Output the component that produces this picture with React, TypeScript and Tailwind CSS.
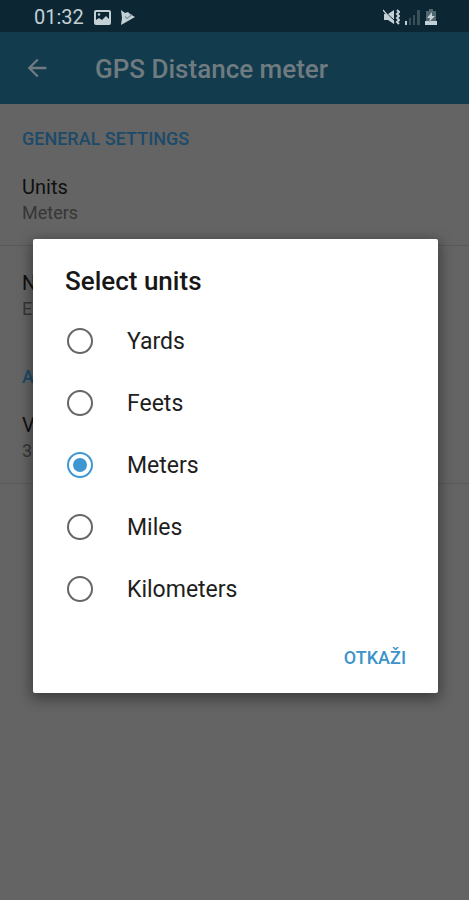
import React, { useState } from "react";
import classNames from "clsx";
import { MdArrowBack } from "react-icons/md";

const unitOptions = ["Yards", "Feets", "Meters", "Miles", "Kilometers"];

interface PreferenceProp {
  title: string;
  summary: string;
  divider?: boolean;
}

const Preference = ({ title, summary, divider }: PreferenceProp) => (
  <div
    className={classNames(
      "h-24 px-[22px] pt-[23px]",
      divider && "border-b border-[#595959]"
    )}
  >
    <div className="text-xl leading-7 text-[#101010]">{title}</div>
    <div className="text-lg leading-6 text-[#363636]">{summary}</div>
  </div>
);

const Category = ({ children }: { children: React.ReactNode }) => (
  <h2 className="h-[46px] px-[22px] pt-[23px] text-lg font-medium leading-6 text-[#1c4a69]">
    {children}
  </h2>
);

const StatusBar = () => (
  <div className="flex h-8 items-center justify-between bg-[#0c2733] pl-[34px] pr-8 pt-0.5 text-[#c3d0d6]">
    <div className="flex items-center gap-2.5">
      <span className="text-xl leading-7">01:32</span>
      <svg className="h-[15px] w-[17px]" viewBox="0 0 17 15">
        <rect x="1" y="1" width="15" height="13" rx="1" fill="none" stroke="currentColor" strokeWidth="2" />
        <path d="M2 13V10l3-2 3 2 4-4 3 3v4z" fill="currentColor" />
        <circle cx="5" cy="4.500" r="1.200" fill="currentColor" />
      </svg>
      <svg className="h-[15px] w-[14px]" viewBox="0 0 14 15">
        <path d="M0 0l4 3 3-1 2 2 5 3-14 8 1-7z" fill="currentColor" />
        <path d="M4 6.500l2 2 5-4" fill="none" stroke="#7d919a" strokeWidth="1.200" />
      </svg>
    </div>
    <div className="flex items-center gap-[5px]">
      <svg className="h-4 w-[17px]" viewBox="0 0 17 16">
        <path d="M1 5h4l6-4v14L5 11H1z" fill="currentColor" />
        <path d="M1 2l10 9" stroke="#0c2733" strokeWidth="1" />
        <path d="M0 1l11 13" stroke="currentColor" strokeWidth="1.200" />
        <path d="M14 1l2 2-2 2 2 2-2 2 2 2-2 2 2 2" fill="none" stroke="currentColor" strokeWidth="2" />
      </svg>
      <svg className="h-[15px] w-[15px]" viewBox="0 0 15 15">
        <path d="M0 11h2v4H0z" fill="currentColor" />
        <path d="M4 8h2v7H4zM8 5h2v10H8zM12 0h3v15h-3z" fill="#395059" />
      </svg>
      <svg className="h-4 w-3" viewBox="0 0 12 16">
        <path d="M4 0h4v2h3v14H1V2h3z" fill="#526871" />
        <path d="M0 12h12v4H0zM7 3L2 9h3l-1 4 6-6H7z" fill="currentColor" />
      </svg>
    </div>
  </div>
);

const App = () => {
  const [unit, setUnit] = useState("Meters");
  const [open, setOpen] = useState(true);

  return (
    <div className="relative min-h-screen bg-[#646464] font-[Roboto,sans-serif]">
      <StatusBar />
      <header className="flex h-[72px] items-center bg-[#123b4e] pl-[23px] text-[#707b80]">
        <button type="button" aria-label="Back">
          <MdArrowBack className="size-7" />
        </button>
        <h1 className="ml-11 pt-0.5 text-[26px] font-medium leading-8">
          GPS Distance meter
        </h1>
      </header>

      <main>
        <Category>GENERAL SETTINGS</Category>
        <Preference title="Units" summary="Meters" divider />
        <Preference title="N" summary="E" />
        <Category>A</Category>
        <Preference title="V" summary="3" divider />
      </main>

      {open && (
        <div className="absolute inset-0 flex items-center pl-[33px] pr-[31px] pt-8">
          <div
            role="dialog"
            aria-labelledby="units-title"
            className="w-full rounded-xs bg-white px-8 pb-[13px] pt-6 shadow-[0_4px_14px_2px_rgba(0,0,0,0.4)]"
          >
            <h2
              id="units-title"
              className="mb-[11px] text-[26px] font-medium leading-9 text-[#171717]"
            >
              Select units
            </h2>
            {unitOptions.map((option) => (
              <label
                key={option}
                className="flex h-[62px] items-center gap-[34px] pl-0.5 text-[23px] text-[#1e1e1e]"
              >
                <input
                  type="radio"
                  name="unit"
                  checked={unit === option}
                  onChange={() => setUnit(option)}
                  className="size-[26px] appearance-none rounded-full border-2 border-[#666666] bg-clip-content p-1 checked:border-[#3d97d3] checked:bg-[#3d97d3]"
                />
                <span className="pt-0.5">{option}</span>
              </label>
            ))}
            <div className="mt-4 flex justify-end">
              <button
                type="button"
                className="h-11 text-lg font-medium text-[#3b93c9]"
                onClick={() => setOpen(false)}
              >
                OTKAŽI
              </button>
            </div>
          </div>
        </div>
      )}
    </div>
  );
};

export default App;
